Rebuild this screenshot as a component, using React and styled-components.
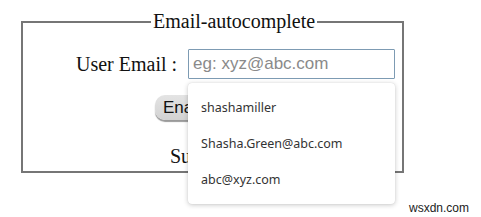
import React from "react";
import styled, { createGlobalStyle } from "styled-components";

const Global = createGlobalStyle`
  html, body {
    margin: 0;
    padding: 0;
    background: #ffffff;
  }
  body {
    width: 481px;
    height: 217px;
    overflow: hidden;
    position: relative;
    font-family: "Liberation Serif", "Times New Roman", serif;
  }
`;

const Box = styled.fieldset`
  box-sizing: border-box;
  width: 383px;
  margin: 10px 0 0 21px;
  padding: 0 0 3px 0;
  border: 2px solid #767676;
  min-width: 0;
`;

const Legend = styled.legend`
  margin-left: 128px;
  padding: 0 2px;
  font-size: 20px;
  line-height: 23px;
  color: #111;
`;

const Row = styled.div`
  display: flex;
  align-items: center;
  margin: 16px 0 0 53px;
`;

const Label = styled.label`
  font-size: 20px;
  color: #111;
  margin-right: 11px;
`;

const Field = styled.div`
  position: relative;
`;

const Input = styled.input`
  box-sizing: border-box;
  width: 207px;
  height: 30px;
  padding: 0 4px;
  border: 1px solid #7d9bb3;
  border-radius: 1px;
  font-family: "Liberation Sans", Arial, sans-serif;
  font-size: 17px;
  color: #222;
  outline: none;
  caret-color: #000;

  &::placeholder {
    color: #8a8a8a;
  }
`;

const Menu = styled.ul`
  position: absolute;
  top: calc(100% + 4px);
  left: 0;
  width: 207px;
  margin: 0;
  padding: 6px 0 7px;
  list-style: none;
  background: #fff;
  border-radius: 4px;
  box-shadow: 0 1px 5px rgba(0, 0, 0, 0.22), 0 0 1px rgba(0, 0, 0, 0.15);
  z-index: 2;
`;

const Item = styled.li`
  height: 36px;
  line-height: 37px;
  padding-left: 13px;
  font-family: "Noto Sans", "Open Sans", sans-serif;
  font-size: 12.5px;
  color: #333;
`;

const Toggle = styled.button`
  display: block;
  margin: 16px 0 0 132px;
  height: 25px;
  padding: 0 8px;
  border: none;
  border-radius: 10px;
  background: linear-gradient(#e4e4e4, #d2d2d2);
  box-shadow: 0 2px 1px #9a9a9a;
  font-family: "Liberation Sans", Arial, sans-serif;
  font-size: 17px;
  color: #111;
`;

const Submit = styled.div`
  margin: 25px 0 0 147px;
  font-size: 20px;
  line-height: 23px;
  color: #111;
`;

const Mark = styled.div`
  position: absolute;
  left: 409px;
  top: 201px;
  font-family: "Liberation Sans", Arial, sans-serif;
  font-size: 12px;
  color: #222;
`;

const suggestions = ["shashamiller", "Shasha.Green@abc.com", "abc@xyz.com"];

export default function App() {
  return (
    <>
      <Global />
      <Box>
        <Legend>Email-autocomplete</Legend>
        <Row>
          <Label htmlFor="email">User Email :</Label>
          <Field>
            <Input id="email" type="email" placeholder="eg: xyz@abc.com" autoFocus />
            <Menu>
              {suggestions.map(s => (
                <Item key={s}>{s}</Item>
              ))}
            </Menu>
          </Field>
        </Row>
        <Toggle>Enable autocomplete</Toggle>
        <Submit>Submit</Submit>
      </Box>
      <Mark>wsxdn.com</Mark>
    </>
  );
}
